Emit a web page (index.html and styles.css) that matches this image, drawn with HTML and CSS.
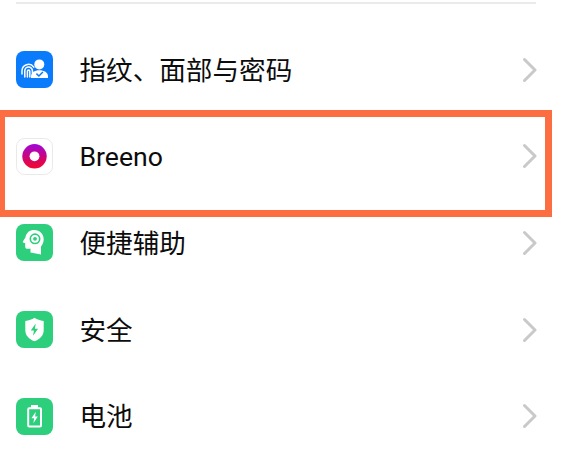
FILE: index.html
```html
<!DOCTYPE html>
<html lang="zh-CN">
<head>
    <meta charset="UTF-8">
    <meta name="viewport" content="width=device-width, initial-scale=1.0">
    <title>设置</title>
    <link rel="stylesheet" href="styles.css">
</head>
<body>
    <div class="line"></div>
    <ul class="list">
        <li>
            <svg class="icon" viewBox="0 0 37 37">
                <rect width="37" height="37" rx="8" fill="#0a7cfb"/>
                <g fill="none" stroke="#fff" stroke-width="1.5" stroke-linecap="round">
                    <path d="M6 23v-3.200a6.500 6.500 0 0 1 11.800-3.700"/>
                    <path d="M8.800 26v-6.200a3.800 3.800 0 0 1 7.600 0V22"/>
                    <path d="M11.400 26v-5.800a1.200 1.200 0 0 1 2.400 0V26"/>
                </g>
                <circle cx="23.300" cy="13.400" r="5" fill="#fff"/>
                <path d="M15 26.900v-1.400c0-4 3.500-6.200 8.300-6.200s8.700 2.200 8.700 6.200v1.400z" fill="#fff"/>
                <path d="M20.400 22.600l2.500 2.400 4-4" fill="none" stroke="#0a7cfb" stroke-width="1.500"/>
            </svg>
            <span class="name">指纹、面部与密码</span>
            <svg class="arrow" viewBox="0 0 16 26"><path d="M3.500 2.500L14 13 3.500 23.500"/></svg>
        </li>
        <li>
            <svg class="icon" viewBox="0 0 37 37">
                <defs>
                    <linearGradient id="ring" x1="0" y1="0" x2="0" y2="1">
                        <stop offset="0.05" stop-color="#a407d4"/>
                        <stop offset="0.5" stop-color="#c9057f"/>
                        <stop offset="0.9" stop-color="#ee0638"/>
                    </linearGradient>
                </defs>
                <rect x="0.5" y="0.5" width="36" height="36" rx="8" fill="#fff" stroke="#e9e9e9"/>
                <circle cx="18.500" cy="18.300" r="12.200" fill="url(#ring)"/>
                <circle cx="18.500" cy="18.300" r="4.900" fill="#fff"/>
            </svg>
            <span class="name">Breeno</span>
            <svg class="arrow" viewBox="0 0 16 26"><path d="M3.500 2.500L14 13 3.500 23.500"/></svg>
        </li>
        <li>
            <svg class="icon" viewBox="0 0 37 37">
                <rect width="37" height="37" rx="8" fill="#2dce7c"/>
                <path d="M14.500 28.500v-3.800h-3c-1.600 0-2.300-.8-2.300-2.300v-3.200l-2-.7c-.5-.2-.6-.6-.3-1.100l2.600-4.200C10.200 8.600 13.700 6 18.300 6c5.400 0 9.400 4.100 9.400 9.200 0 3-1.200 5.400-2.700 7.300v8z" fill="#fff"/>
                <circle cx="19" cy="14.800" r="4.700" fill="none" stroke="#2dce7c" stroke-width="1.600"/>
                <circle cx="19" cy="14.800" r="1.900" fill="#2dce7c"/>
            </svg>
            <span class="name">便捷辅助</span>
            <svg class="arrow" viewBox="0 0 16 26"><path d="M3.500 2.500L14 13 3.500 23.500"/></svg>
        </li>
        <li>
            <svg class="icon" viewBox="0 0 37 37">
                <rect width="37" height="37" rx="8" fill="#2dce7c"/>
                <path d="M18.500 6.800c2.600 1.800 5.500 2.800 9.200 3.100v9.300c0 5.100-3.500 8.800-9.200 11.100-5.700-2.300-9.200-6-9.200-11.100V9.900c3.700-.3 6.600-1.300 9.200-3.100z" fill="#fff"/>
                <path d="M19.700 12.500l-4.900 7h3.100l-.8 5.300 4.900-7.100h-3.100z" fill="#2dce7c"/>
            </svg>
            <span class="name">安全</span>
            <svg class="arrow" viewBox="0 0 16 26"><path d="M3.500 2.500L14 13 3.500 23.500"/></svg>
        </li>
        <li>
            <svg class="icon" viewBox="0 0 37 37">
                <rect width="37" height="37" rx="8" fill="#2dce7c"/>
                <path d="M15 7h7v3h-7z" fill="#fff"/>
                <rect x="12.200" y="10.300" width="12.800" height="18.200" rx="1" fill="none" stroke="#fff" stroke-width="2"/>
                <path d="M19.800 13.800l-4.400 6.400h2.700l-.7 5 4.400-6.600h-2.700z" fill="#fff"/>
            </svg>
            <span class="name">电池</span>
            <svg class="arrow" viewBox="0 0 16 26"><path d="M3.500 2.500L14 13 3.500 23.500"/></svg>
        </li>
    </ul>
    <div class="mark"></div>
</body>
</html>
```
FILE: styles.css
```css
body{margin: 0;background: #fff;height: 456px;overflow: hidden;position: relative;font-family: Roboto,"Noto Sans CJK SC",sans-serif;}
ul{padding: 0;margin: 0;}li{list-style: none;}

.line{width: 520px;height: 2px;margin: 2px 0 0 16px;background: #ebebeb;}

.list{padding: 22.500px 32px 0 16px;}
.list li{height: 86.600px;display: flex;align-items: center;}
.icon{width: 37px;height: 37px;flex: none;}
.name{flex: 1;margin-left: 26.500px;padding-top: 2px;font-size: 26.600px;line-height: 40px;color: #0c0c0c;}
.arrow{width: 16px;height: 26px;flex: none;}
.arrow path{fill: none;stroke: #c9c9c9;stroke-width: 3;stroke-linecap: round;stroke-linejoin: round;}

/* 选中框 */
.mark{position: absolute;left: -2px;top: 110px;width: 554px;height: 107px;box-sizing: border-box;border: 7px solid #fc6e41;}
```
